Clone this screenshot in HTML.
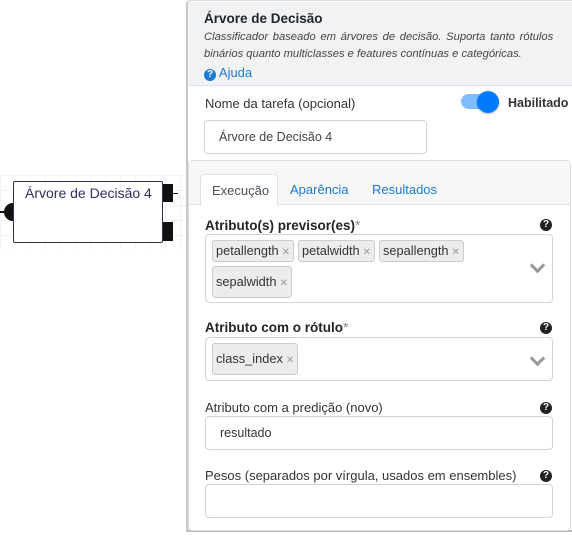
<!DOCTYPE html>
<html><head><meta charset="utf-8"><style>
*{box-sizing:border-box;margin:0;padding:0}
body{width:572px;height:536px;position:relative;overflow:hidden;background:#fff;font-family:"Liberation Sans",sans-serif;color:#212529;font-size:13px}
.abs{position:absolute}
.grid{left:0;top:175px;width:186px;height:75px;background-image:linear-gradient(#f2f2f2 1px,transparent 1px),linear-gradient(90deg,#f2f2f2 1px,transparent 1px);background-size:15px 15px}
.panel{left:186px;top:0;width:390px;height:532px;border-left:2px solid #c8c8c8;border-bottom:2px solid #b8b8b8;border-top:1px solid #ddd;border-radius:4px 0 0 0}
.hdr{left:188px;top:2px;width:384px;height:84px;background:#f1f2f4;border-bottom:1px solid #dde}
.q{display:inline-block;width:12px;height:12px;border-radius:50%;color:#fff;font-size:10px;font-weight:bold;text-align:center;line-height:12px}
.input{border:1px solid #ced4da;border-radius:4px;background:#fff}
.tag{display:inline-block;background:#ececec;border:1px solid #ccc;border-radius:3px;padding:2px 3px 3px 3px;font-size:12.8px;color:#333;margin-right:4px}
.tag i{font-style:normal;color:#999;font-size:10px;margin-left:3px}
.lbl{font-size:13px;color:#333}
.bl{font-weight:bold;font-size:13.5px;color:#212529}
.chev{width:11px;height:11px;border-right:3px solid #999;border-bottom:3px solid #999;transform:rotate(45deg)}
</style></head><body>
<div class="abs grid"></div>
<div class="abs" style="left:4px;top:203px;width:18px;height:18px;border-radius:50%;background:#111"></div>
<div class="abs" style="left:0;top:211px;width:5px;height:2px;background:#111"></div>
<div class="abs" style="left:163px;top:184px;width:10px;height:18px;background:#111"></div>
<div class="abs" style="left:163px;top:222px;width:10px;height:19px;background:#111"></div>
<div class="abs" style="left:172px;top:193px;width:6px;height:1px;background:#111"></div>
<div class="abs" style="left:13px;top:181px;width:150px;height:62px;border:1px solid #2d3050;border-radius:2px;background:#fff;color:#2d3060;font-size:14px;padding:3px 0 0 11px">Árvore de Decisão 4</div>

<div class="abs panel"></div>
<div class="abs hdr"></div>
<div class="abs" style="left:204px;top:11px;font-weight:bold;font-size:13.5px">Árvore de Decisão</div>
<div class="abs" style="left:204px;top:29px;width:360px;font-style:italic;font-size:11.2px;line-height:17px;color:#444;white-space:nowrap"><span style="word-spacing:1.6px">Classificador baseado em árvores de decisão. Suporta tanto rótulos</span><br>binários quanto multiclasses e features contínuas e categóricas.</div>
<div class="abs" style="left:204px;top:65px;color:#1a7bd4;font-size:13px"><span class="q" style="background:#1a7bd4">?</span> Ajuda</div>

<div class="abs lbl" style="left:205px;top:96px">Nome da tarefa (opcional)</div>
<div class="abs" style="left:461px;top:94px;width:38px;height:15px;border-radius:8px;background:#80bdff"></div>
<div class="abs" style="left:477px;top:91px;width:22px;height:22px;border-radius:50%;background:#007bff;box-shadow:0 1px 2px rgba(0,0,0,.3)"></div>
<div class="abs" style="left:508px;top:96px;font-weight:bold;font-size:12.5px;color:#333">Habilitado</div>
<div class="abs input" style="left:204px;top:120px;width:223px;height:34px;padding:9px 0 0 14px;font-size:12.5px;color:#444">Árvore de Decisão 4</div>

<div class="abs" style="left:188px;top:160px;width:383px;height:371px;border:1px solid #ddd;border-radius:4px;background:#fff"></div>
<div class="abs" style="left:189px;top:161px;width:381px;height:44px;background:#f7f7f7;border-bottom:1px solid #dee2e6"></div>
<div class="abs" style="left:200px;top:174px;width:78px;height:32px;background:#fff;border:1px solid #dee2e6;border-bottom:none;border-radius:4px 4px 0 0;padding:8px 0 0 11px;color:#495057">Execução</div>
<div class="abs" style="left:290px;top:182px;color:#1a7bd4">Aparência</div>
<div class="abs" style="left:372px;top:182px;color:#1a7bd4">Resultados</div>

<div class="abs bl" style="left:205px;top:218px">Atributo(s) previsor(es)<span style="color:#888;font-weight:normal">*</span></div>
<div class="abs q" style="left:540px;top:219px;background:#222">?</div>
<div class="abs input" style="left:205px;top:234px;width:348px;height:69px;padding:5px 0 0 6px">
<span class="tag">petallength<i>✕</i></span><span class="tag">petalwidth<i>✕</i></span><span class="tag">sepallength<i>✕</i></span><br>
<span class="tag" style="margin-top:4px;padding:7px 3px 8px 3px">sepalwidth<i>✕</i></span></div>
<div class="abs chev" style="left:532px;top:260px"></div>

<div class="abs bl" style="left:205px;top:320px">Atributo com o rótulo<span style="color:#888;font-weight:normal">*</span></div>
<div class="abs q" style="left:540px;top:322px;background:#222">?</div>
<div class="abs input" style="left:205px;top:337px;width:348px;height:44px;padding:5px 0 0 6px">
<span class="tag" style="padding:7px 3px 8px 3px">class_index<i>✕</i></span></div>
<div class="abs chev" style="left:532px;top:353px"></div>

<div class="abs lbl" style="left:205px;top:400px">Atributo com a predição (novo)</div>
<div class="abs q" style="left:540px;top:402px;background:#222">?</div>
<div class="abs input" style="left:205px;top:416px;width:348px;height:34px;padding:9px 0 0 14px;font-size:12.5px;color:#333">resultado</div>

<div class="abs lbl" style="left:205px;top:468px">Pesos (separados por vírgula, usados em ensembles)</div>
<div class="abs q" style="left:540px;top:470px;background:#222">?</div>
<div class="abs input" style="left:205px;top:484px;width:348px;height:34px"></div>
</body></html>
